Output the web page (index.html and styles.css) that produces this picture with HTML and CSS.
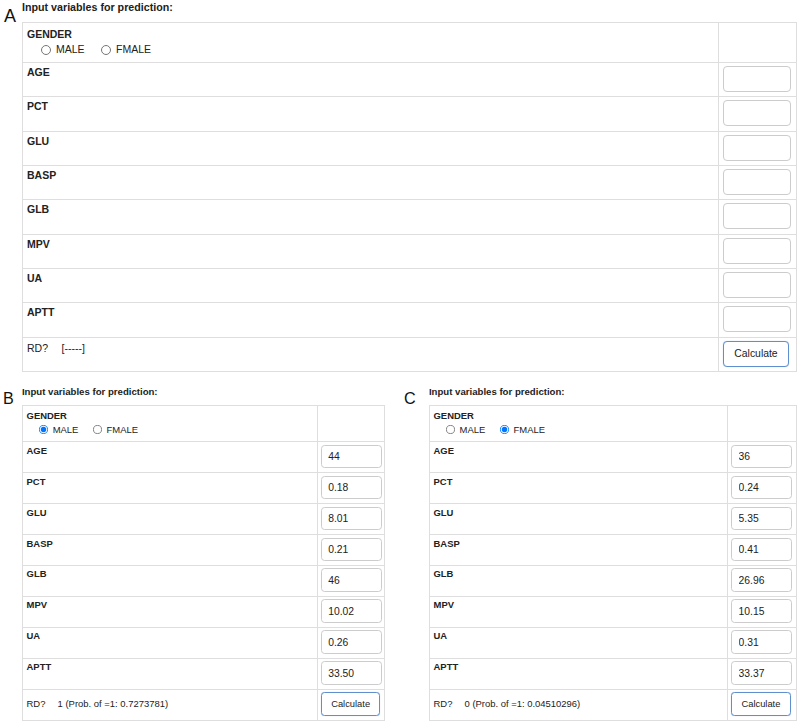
FILE: index.html
```html
<!DOCTYPE html>
<html>
<head>
<meta charset="utf-8">
<title>Input variables for prediction</title>
<link rel="stylesheet" href="styles.css">
</head>
<body>
<div class="page">
  <section class="panel panel-a">
    <div class="letter">A</div>
    <div class="content">
      <div class="title">Input variables for prediction:</div>
      <table class="vars">
        <tr class="gender-row">
          <td class="lbl">
            <div class="gname">GENDER</div>
            <div class="radios">
              <label class="opt"><input type="radio" name="ga">MALE</label>
              <label class="opt"><input type="radio" name="ga">FMALE</label>
            </div>
          </td>
          <td class="val"></td>
        </tr>
        <tr><td class="lbl">AGE</td><td class="val"><input class="num" type="text"></td></tr>
        <tr><td class="lbl">PCT</td><td class="val"><input class="num" type="text"></td></tr>
        <tr><td class="lbl">GLU</td><td class="val"><input class="num" type="text"></td></tr>
        <tr><td class="lbl">BASP</td><td class="val"><input class="num" type="text"></td></tr>
        <tr><td class="lbl">GLB</td><td class="val"><input class="num" type="text"></td></tr>
        <tr><td class="lbl">MPV</td><td class="val"><input class="num" type="text"></td></tr>
        <tr><td class="lbl">UA</td><td class="val"><input class="num" type="text"></td></tr>
        <tr><td class="lbl">APTT</td><td class="val"><input class="num" type="text"></td></tr>
        <tr class="rd-row"><td class="rd"><span>RD?</span><span class="res">[-----]</span></td><td class="val"><button class="calc" type="button">Calculate</button></td></tr>
      </table>
    </div>
  </section>

  <div class="lower">
    <section class="panel panel-small panel-b">
      <div class="letter">B</div>
      <div class="content">
        <div class="title">Input variables for prediction:</div>
        <table class="vars">
          <tr class="gender-row">
            <td class="lbl">
              <div class="gname">GENDER</div>
              <div class="radios">
                <label class="opt"><input type="radio" name="gb" checked>MALE</label>
                <label class="opt"><input type="radio" name="gb">FMALE</label>
              </div>
            </td>
            <td class="val"></td>
          </tr>
          <tr><td class="lbl">AGE</td><td class="val"><input class="num" type="text" value="44"></td></tr>
          <tr><td class="lbl">PCT</td><td class="val"><input class="num" type="text" value="0.18"></td></tr>
          <tr><td class="lbl">GLU</td><td class="val"><input class="num" type="text" value="8.01"></td></tr>
          <tr><td class="lbl">BASP</td><td class="val"><input class="num" type="text" value="0.21"></td></tr>
          <tr><td class="lbl">GLB</td><td class="val"><input class="num" type="text" value="46"></td></tr>
          <tr><td class="lbl">MPV</td><td class="val"><input class="num" type="text" value="10.02"></td></tr>
          <tr><td class="lbl">UA</td><td class="val"><input class="num" type="text" value="0.26"></td></tr>
          <tr><td class="lbl">APTT</td><td class="val"><input class="num" type="text" value="33.50"></td></tr>
          <tr class="rd-row"><td class="rd"><span>RD?</span><span class="res">1 (Prob. of =1: 0.7273781)</span></td><td class="val"><button class="calc" type="button">Calculate</button></td></tr>
        </table>
      </div>
    </section>

    <section class="panel panel-small panel-c">
      <div class="letter">C</div>
      <div class="content">
        <div class="title">Input variables for prediction:</div>
        <table class="vars">
          <tr class="gender-row">
            <td class="lbl">
              <div class="gname">GENDER</div>
              <div class="radios">
                <label class="opt"><input type="radio" name="gc">MALE</label>
                <label class="opt"><input type="radio" name="gc" checked>FMALE</label>
              </div>
            </td>
            <td class="val"></td>
          </tr>
          <tr><td class="lbl">AGE</td><td class="val"><input class="num" type="text" value="36"></td></tr>
          <tr><td class="lbl">PCT</td><td class="val"><input class="num" type="text" value="0.24"></td></tr>
          <tr><td class="lbl">GLU</td><td class="val"><input class="num" type="text" value="5.35"></td></tr>
          <tr><td class="lbl">BASP</td><td class="val"><input class="num" type="text" value="0.41"></td></tr>
          <tr><td class="lbl">GLB</td><td class="val"><input class="num" type="text" value="26.96"></td></tr>
          <tr><td class="lbl">MPV</td><td class="val"><input class="num" type="text" value="10.15"></td></tr>
          <tr><td class="lbl">UA</td><td class="val"><input class="num" type="text" value="0.31"></td></tr>
          <tr><td class="lbl">APTT</td><td class="val"><input class="num" type="text" value="33.37"></td></tr>
          <tr class="rd-row"><td class="rd"><span>RD?</span><span class="res">0 (Prob. of =1: 0.04510296)</span></td><td class="val"><button class="calc" type="button">Calculate</button></td></tr>
        </table>
      </div>
    </section>
  </div>
</div>
</body>
</html>
```

FILE: styles.css
```css
* {
  box-sizing: border-box;
}

html, body {
  margin: 0;
  padding: 0;
  background: #ffffff;
}

body {
  font-family: "Liberation Sans", Arial, sans-serif;
  color: #222222;
}

.panel {
  display: flex;
  align-items: flex-start;
}

.letter {
  font-size: 18px;
  line-height: 18px;
  color: #111111;
  flex: none;
}

.panel-a .letter {
  width: 22px;
  padding: 6.5px 0 0 4px;
}

.title {
  font-weight: bold;
  font-size: 10.7px;
  line-height: 13px;
}

.panel-a .title {
  padding-top: 1px;
  height: 22px;
}

.vars {
  border-collapse: collapse;
  table-layout: fixed;
}

.panel-a .vars {
  width: 775px;
}

.vars td {
  box-sizing: content-box;
  border: 1px solid #dedede;
  vertical-align: top;
  padding: 3px 4px 4.33px 4px;
  font-size: 10.5px;
  line-height: 13px;
}

.vars td.lbl {
  font-weight: bold;
}

.vars td.val {
  width: 68px;
  padding: 3px 5px 4.33px 4px;
}

.gender-row td.lbl {
  padding-top: 5px;
  padding-bottom: 5.8px;
}

.radios {
  display: flex;
  align-items: center;
  margin-top: 2.2px;
  padding-left: 14px;
  font-weight: normal;
}

.opt {
  display: inline-flex;
  align-items: center;
  margin-right: 16.4px;
}

.opt input {
  width: 10px;
  height: 10px;
  margin: 0 5px 0 0;
}

.num {
  display: block;
  width: 68px;
  height: 26px;
  margin: 0;
  padding: 0 7px;
  border: 1px solid #cccccc;
  border-radius: 4px;
  background: #ffffff;
  font-family: "Liberation Sans", Arial, sans-serif;
  font-size: 11.5px;
  color: #222222;
  outline: none;
}

.calc {
  display: block;
  width: 66px;
  height: 26px;
  margin: 0;
  padding: 0;
  border: 1px solid #5f8fcc;
  border-radius: 4px;
  background: #ffffff;
  font-family: "Liberation Sans", Arial, sans-serif;
  font-size: 10.4px;
  color: #222222;
  box-shadow: 0 0 1px rgba(95, 143, 204, 0.5);
}

.vars td.rd {
  font-weight: normal;
}

.panel-a .vars td.rd {
  padding-top: 4.5px;
}

.res {
  margin-left: 13.5px;
}

.lower {
  display: flex;
  margin-top: 14px;
}

.panel-small {
  zoom: 0.9;
}

.panel-small .vars td.rd {
  vertical-align: middle;
}

.panel-small .title {
  padding-top: 0.5px;
  height: 21px;
}

.panel-b {
  width: 444.4px;
}

.panel-b .letter {
  width: 24.4px;
  padding: 4.5px 0 0 3.3px;
}

.panel-b .vars {
  width: 403px;
}

.panel-b .vars td.val {
  padding-left: 3.5px;
  padding-right: 1.7px;
}

.panel-c .letter {
  width: 32.2px;
  padding: 5px 0 0 4.4px;
}

.panel-c .vars {
  width: 409px;
}

.panel-c .vars td.val {
  padding-left: 4px;
  padding-right: 4px;
}
```
